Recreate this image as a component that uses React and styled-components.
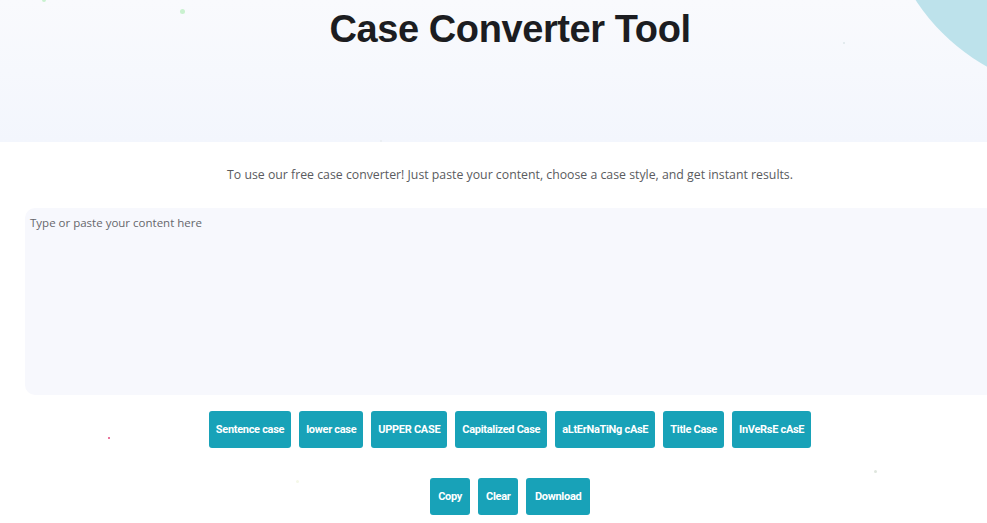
import React, { useState } from "react";
import styled, { createGlobalStyle } from "styled-components";

const GlobalStyle = createGlobalStyle`
  html, body {
    margin: 0;
    padding: 0;
    overflow: hidden;
    background: #fff;
  }
  body {
    font-family: "Open Sans", "Noto Sans", sans-serif;
  }
`;

const Page = styled.div`
  position: relative;
  width: 1020px;
  min-height: 523px;
`;

const Hero = styled.header`
  position: relative;
  height: 142px;
  background: linear-gradient(180deg, #f9fafd 0%, #f3f6fd 100%);
  overflow: hidden;
  display: flex;
  justify-content: center;
`;

const Blob = styled.div`
  position: absolute;
  top: -312px;
  right: -267px;
  width: 404px;
  height: 404px;
  border-radius: 50%;
  background: #bde2eb;
`;

const Title = styled.h1`
  margin: 8px 0 0;
  font-family: "Liberation Sans", Arial, sans-serif;
  font-weight: 700;
  font-size: 38px;
  letter-spacing: -0.4px;
  color: #1c1d21;
`;

const Main = styled.main`
  padding: 24px 25px 0;
  display: flex;
  flex-direction: column;
  align-items: center;
`;

const Intro = styled.p`
  margin: 0 0 25px;
  font-size: 12.3px;
  color: #5a5b60;
`;

const Editor = styled.textarea`
  box-sizing: border-box;
  width: 100%;
  height: 187px;
  border: none;
  outline: none;
  resize: none;
  border-radius: 10px;
  background: #f7f8fd;
  padding: 7px 5px;
  font-family: "Open Sans", sans-serif;
  font-size: 11.5px;
  color: #333;

  &::placeholder {
    color: #66676c;
  }
`;

const ButtonRow = styled.div`
  display: flex;
  gap: 8px;
  justify-content: center;
  margin-top: ${p => p.$top}px;
`;

const Button = styled.button`
  height: 37px;
  padding: 0 ${p => p.$pad || 7}px;
  border: none;
  border-radius: 3px;
  background: #18a2b8;
  color: #fff;
  font-family: "Roboto", sans-serif;
  font-weight: 700;
  font-size: 11px;
  letter-spacing: -0.3px;
  cursor: pointer;
`;

const Dot = styled.span`
  position: absolute;
  width: ${p => p.$size}px;
  height: ${p => p.$size}px;
  border-radius: 50%;
  background: ${p => p.$color};
`;

const dots = [
  { x: 180, y: 9, size: 5, color: "#c9f1cf" },
  { x: 42, y: -2, size: 4, color: "#c9f1cf" },
  { x: 843, y: 42, size: 2, color: "#dde6e8" },
  { x: 108, y: 437, size: 2, color: "#e3487c" },
  { x: 874, y: 470, size: 3, color: "#dfe6de" },
  { x: 296, y: 480, size: 3, color: "#f5f8e8" },
  { x: 380, y: 140, size: 2, color: "#e8ecef" },
];

const caseButtons = [
  "Sentence case",
  "lower case",
  "UPPER CASE",
  "Capitalized Case",
  "aLtErNaTiNg cAsE",
  "Title Case",
  "InVeRsE cAsE",
];

export default function App() {
  const [text, setText] = useState("");

  return (
    <Page>
      <GlobalStyle />
      <Hero>
        <Blob />
        <Title>Case Converter Tool</Title>
      </Hero>
      <Main>
        <Intro>
          To use our free case converter! Just paste your content, choose a case style, and get instant results.
        </Intro>
        <Editor
          placeholder="Type or paste your content here"
          value={text}
          onChange={e => setText(e.target.value)}
        />
        <ButtonRow $top={16}>
          {caseButtons.map(label => (
            <Button key={label}>{label}</Button>
          ))}
        </ButtonRow>
        <ButtonRow $top={30}>
          <Button $pad={8}>Copy</Button>
          <Button $pad={8}>Clear</Button>
          <Button $pad={8.5}>Download</Button>
        </ButtonRow>
      </Main>
      {dots.map((d, i) => (
        <Dot key={i} $size={d.size} $color={d.color} style={{ left: d.x, top: d.y }} />
      ))}
    </Page>
  );
}
